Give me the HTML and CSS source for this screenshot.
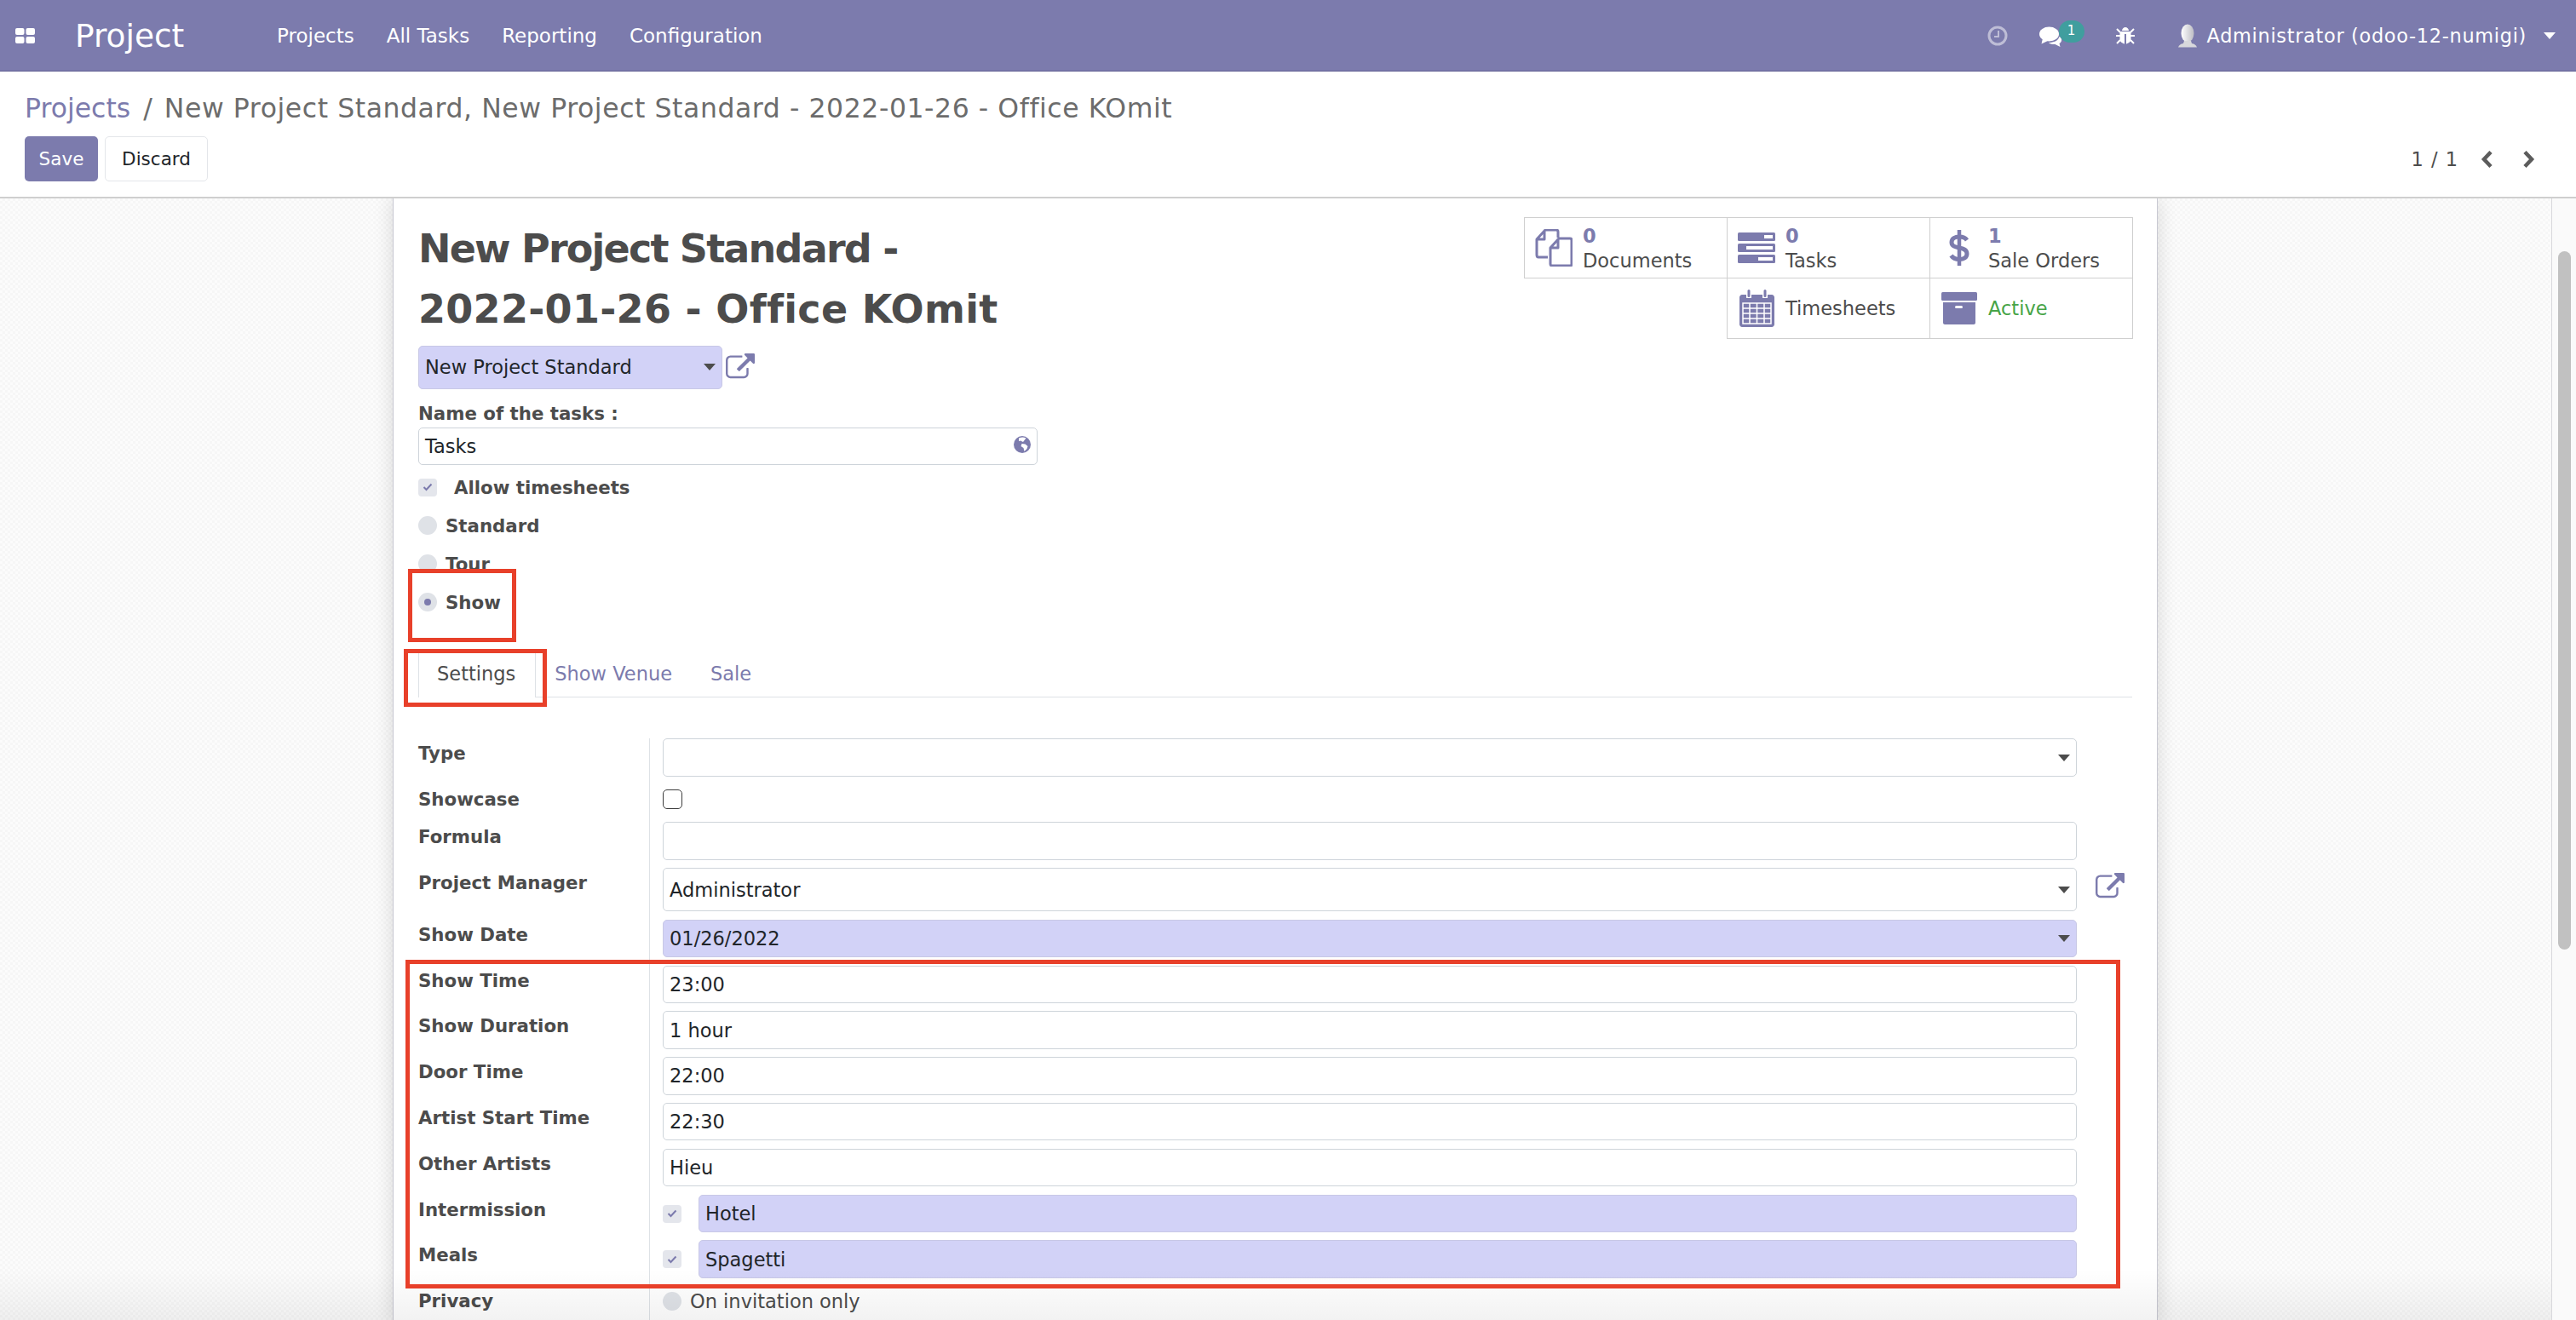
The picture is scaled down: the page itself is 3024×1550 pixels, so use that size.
FILE: index.html
```html
<!DOCTYPE html>
<html lang="en">
<head>
  <meta charset="UTF-8">
  <title>Project - Odoo</title>
  <link rel="stylesheet" href="styles.css">
</head>
<body>

  <!-- Top navbar -->
  <header class="navbar">
    <svg class="apps-icon" viewBox="0 0 23 18"><rect width="10.5" height="8" rx="2"/><rect x="12.5" width="10.5" height="8" rx="2"/><rect y="10" width="10.5" height="8" rx="2"/><rect x="12.5" y="10" width="10.5" height="8" rx="2"/></svg>
    <span class="brand">Project</span>
    <nav class="menu">
      <a>Projects</a>
      <a>All Tasks</a>
      <a>Reporting</a>
      <a>Configuration</a>
    </nav>
    <div class="systray">
      <svg class="clock-icon" viewBox="0 0 24 24"><circle cx="12" cy="12" r="10" fill="none" stroke="#fff" stroke-width="3"/><path d="M13 6v7H8" fill="none" stroke="#fff" stroke-width="2"/></svg>
      <div class="chat">
        <svg class="chat-icon" viewBox="0 0 28 24"><ellipse cx="12.500" cy="9" rx="11.500" ry="8.500" fill="#fff"/><path d="M5 14L3.500 20.500 12 16.500z" fill="#fff"/><path d="M12 19c6 0 11-2 12.500-7 2 1 3 3 2.500 5-.5 1.500-1.500 2.500-2.500 3l1 4-6-3c-3 .3-6-.3-7.500-2z" fill="#fff"/></svg>
        <span class="chat-badge">1</span>
      </div>
      <svg class="bug-icon" viewBox="0 0 22 21"><path d="M7 5c0-2 2-4 4-4s4 2 4 4zM6 6h10c1 0 1.500 1 1.500 2v7c0 3-3 5-5.500 5.500V9h-2v11.500C7.500 20 4.500 18 4.500 15V8C4.500 7 5 6 6 6z" fill="#fff"/><path d="M1 3l4 4M21 3l-4 4M0 11h5M22 11h-5M1 20l4-4M21 20l-4-4" stroke="#fff" stroke-width="2" fill="none"/></svg>
      <svg class="user-icon" viewBox="0 0 24 28"><defs><linearGradient id="head" x1="0" x2="1"><stop offset="0" stop-color="#fff"/><stop offset="1" stop-color="#bdbdc4"/></linearGradient></defs><ellipse cx="12" cy="11" rx="7.500" ry="10.500" fill="url(#head)"/><path d="M8 20h8l1 3c3 .5 5 2 6 4.500H1C2 25 4 23.500 7 23z" fill="#d8d8dc"/></svg>
      <span class="user-name">Administrator (odoo-12-numigi)</span>
      <span class="caret caret-white"></span>
    </div>
  </header>

  <!-- Breadcrumb, buttons and pager -->
  <section class="control-panel">
    <div class="breadcrumb"><a>Projects</a><span class="crumb-sep">/</span><span class="crumb-current">New Project Standard, New Project Standard - 2022-01-26 - Office KOmit</span></div>
    <div class="cp-bottom">
      <div class="cp-buttons">
        <button class="btn btn-primary">Save</button>
        <button class="btn btn-secondary">Discard</button>
      </div>
      <div class="pager">
        <span class="pager-value">1 / 1</span>
        <svg class="pager-arrow" viewBox="0 0 15 22"><path d="M12 2.500L4 11l8 8.500" fill="none" stroke="#5c5c5c" stroke-width="4.500"/></svg>
        <svg class="pager-arrow" viewBox="0 0 15 22"><path d="M3 2.500l8 8.500-8 8.500" fill="none" stroke="#5c5c5c" stroke-width="4.500"/></svg>
      </div>
    </div>
  </section>

  <div class="content">
    <main class="view">
      <div class="sheet">

        <div class="sheet-head">
          <div class="sheet-left">
            <h1 class="title"><span class="title-one">New Project Standard -</span><br><span class="title-two">2022-01-26 - Office KOmit</span></h1>
            <div class="select-row">
              <div class="field field-required field-parent"><span>New Project Standard</span><span class="caret"></span></div>
              <svg class="ext-icon ext-small" viewBox="0 0 1792 1792"><path d="M1408 928v320q0 119-84.500 203.500t-203.500 84.500h-832q-119 0-203.500-84.500t-84.500-203.500v-832q0-119 84.500-203.500t203.500-84.500h704q14 0 23 9t9 23v64q0 14-9 23t-23 9h-704q-66 0-113 47t-47 113v832q0 66 47 113t113 47h832q66 0 113-47t47-113v-320q0-14 9-23t23-9h64q14 0 23 9t9 23zm384-864v512q0 26-19 45t-45 19-45-19l-176-176-652 652q-10 10-23 10t-23-10l-114-114q-10-10-10-23t10-23l652-652-176-176q-19-19-19-45t19-45 45-19h512q26 0 45 19t19 45z"/></svg>
            </div>
            <div class="tasks-label">Name of the tasks :</div>
            <div class="field field-tasks"><span>Tasks</span>
              <svg class="globe-icon" viewBox="0 0 20 20"><circle cx="10" cy="10" r="10" fill="#7c7bad"/><path d="M6 2.500c3-1.500 6-1.500 8.500 0l-2 2.500-1.500 2-3-1.500-2 .5zM9.500 9l4 .5 3 2.500-1 3-3 3-1-4-3-2z" fill="#fff"/></svg>
            </div>
            <label class="check-row check-row-first"><span class="fake-check"><svg viewBox="0 0 12 10"><path d="M1.500 5l3 3 6-6.500" fill="none" stroke="#7c7bad" stroke-width="2"/></svg></span><b class="allow-label">Allow timesheets</b></label>
            <label class="check-row"><span class="fake-radio"></span><b>Standard</b></label>
            <label class="check-row"><span class="fake-radio"></span><b>Tour</b></label>
            <label class="check-row"><span class="fake-radio fake-radio-on"></span><b>Show</b></label>
          </div>

          <div class="stats">
            <div class="stat">
              <span class="stat-icon"><svg class="icon-docs" viewBox="0 0 44 44"><path d="M27 10V3q0-2-2-2H12L2 12V30q0 3 2 3H15M11 2V12H2" fill="none" stroke="#7c7bad" stroke-width="3" stroke-linejoin="round"/><path d="M28 11H41q2 0 2 2V41q0 2-2 2H20q-2 0-2-2V22zM27 11V22H18" fill="none" stroke="#7c7bad" stroke-width="3" stroke-linejoin="round"/></svg></span>
              <div class="stat-text"><b class="stat-num">0</b><span>Documents</span></div>
            </div>
            <div class="stat">
              <span class="stat-icon"><svg class="icon-tasks" viewBox="0 0 44 36"><rect width="44" height="10" rx="1.500"/><rect y="13" width="44" height="10" rx="1.500"/><rect y="26" width="44" height="10" rx="1.500"/><rect x="31" y="3" width="10" height="4" fill="#fff"/><rect x="10" y="16" width="31" height="4" fill="#fff"/><rect x="24" y="29" width="17" height="4" fill="#fff"/></svg></span>
              <div class="stat-text"><b class="stat-num">0</b><span>Tasks</span></div>
            </div>
            <div class="stat">
              <span class="stat-icon"><svg class="icon-usd" viewBox="0 0 24 44"><path d="M21 13c-2-3-5-4-9-4-5 0-9 2-9 6.500C3 25 21 19 21 29c0 4.500-4 6.500-9 6.500-4 0-7.500-1.500-9.500-4.500" fill="none" stroke="#7c7bad" stroke-width="5"/><path d="M12 1v42" stroke="#7c7bad" stroke-width="4.500"/></svg></span>
              <div class="stat-text"><b class="stat-num">1</b><span>Sale Orders</span></div>
            </div>
            <div class="stat stat-second">
              <span class="stat-icon"><svg class="icon-cal" viewBox="0 0 41 44"><path d="M3 6h5v4h6V6h13v4h6V6h5c1.500 0 3 1.500 3 3v32c0 1.500-1.500 3-3 3H3c-1.500 0-3-1.500-3-3V9c0-1.500 1.500-3 3-3z" fill="#7c7bad"/><rect x="9.500" y="0" width="3" height="9" rx="1.500" fill="#7c7bad"/><rect x="28.500" y="0" width="3" height="9" rx="1.500" fill="#7c7bad"/><path d="M4 16h33v24H4zM4 22h33M4 28h33M4 34h33M12 16v24M20.500 16v24M29 16v24" fill="none" stroke="#fff" stroke-width="1.500"/></svg></span>
              <div class="stat-text"><span>Timesheets</span></div>
            </div>
            <div class="stat">
              <span class="stat-icon"><svg class="icon-archive" viewBox="0 0 42 38"><rect width="42" height="10" rx="1.500"/><path d="M2 12h38v24c0 1-1 2-2 2H4c-1 0-2-1-2-2z"/><rect x="16" y="16" width="9" height="3" rx="1.500" fill="#fff"/></svg></span>
              <div class="stat-text"><span class="stat-active">Active</span></div>
            </div>
          </div>
        </div>

        <!-- Notebook tabs -->
        <ul class="tabs">
          <li class="tab tab-active">Settings</li>
          <li class="tab">Show Venue</li>
          <li class="tab">Sale</li>
        </ul>

        <!-- Settings form -->
        <div class="form">
          <div class="row"><div class="row-label">Type</div><div class="row-value"><div class="field"><span></span><span class="caret"></span></div></div></div>
          <div class="row row-short"><div class="row-label">Showcase</div><div class="row-value"><span class="plain-check"></span></div></div>
          <div class="row"><div class="row-label">Formula</div><div class="row-value"><div class="field"></div></div></div>
          <div class="row"><div class="row-label">Project Manager</div><div class="row-value">
            <div class="field field-tall"><span>Administrator</span><span class="caret"></span></div>
            <svg class="ext-icon" viewBox="0 0 1792 1792"><path d="M1408 928v320q0 119-84.500 203.500t-203.500 84.500h-832q-119 0-203.500-84.500t-84.500-203.500v-832q0-119 84.500-203.500t203.500-84.500h704q14 0 23 9t9 23v64q0 14-9 23t-23 9h-704q-66 0-113 47t-47 113v832q0 66 47 113t113 47h832q66 0 113-47t47-113v-320q0-14 9-23t23-9h64q14 0 23 9t9 23zm384-864v512q0 26-19 45t-45 19-45-19l-176-176-652 652q-10 10-23 10t-23-10l-114-114q-10-10-10-23t10-23l652-652-176-176q-19-19-19-45t19-45 45-19h512q26 0 45 19t19 45z"/></svg>
          </div></div>
          <div class="row"><div class="row-label">Show Date</div><div class="row-value"><div class="field field-required"><span>01/26/2022</span><span class="caret"></span></div></div></div>
          <div class="row"><div class="row-label">Show Time</div><div class="row-value"><div class="field"><span>23:00</span></div></div></div>
          <div class="row"><div class="row-label">Show Duration</div><div class="row-value"><div class="field"><span>1 hour</span></div></div></div>
          <div class="row"><div class="row-label">Door Time</div><div class="row-value"><div class="field"><span>22:00</span></div></div></div>
          <div class="row"><div class="row-label">Artist Start Time</div><div class="row-value"><div class="field"><span>22:30</span></div></div></div>
          <div class="row"><div class="row-label">Other Artists</div><div class="row-value"><div class="field"><span>Hieu</span></div></div></div>
          <div class="row"><div class="row-label">Intermission</div><div class="row-value">
            <span class="fake-check"><svg viewBox="0 0 12 10"><path d="M1.500 5l3 3 6-6.500" fill="none" stroke="#7c7bad" stroke-width="2"/></svg></span>
            <div class="field field-required field-checked"><span>Hotel</span></div>
          </div></div>
          <div class="row"><div class="row-label">Meals</div><div class="row-value">
            <span class="fake-check"><svg viewBox="0 0 12 10"><path d="M1.500 5l3 3 6-6.500" fill="none" stroke="#7c7bad" stroke-width="2"/></svg></span>
            <div class="field field-required field-checked"><span>Spagetti</span></div>
          </div></div>
          <div class="row"><div class="row-label">Privacy</div><div class="row-value row-privacy"><span class="fake-radio"></span><span class="privacy-text">On invitation only</span></div></div>
        </div>
      </div>

      <div class="bottom-fade"></div>
    </main>

    <div class="scrollbar"><div class="scroll-thumb"></div></div>

    <!-- Red annotation boxes drawn over the screenshot -->
    <div class="mark mark-show"></div>
    <div class="mark mark-tab"></div>
    <div class="mark mark-rows"></div>
  </div>

</body>
</html>
```

FILE: styles.css
```css
/* Reset and page */
* {
  box-sizing: border-box;
  margin: 0;
  padding: 0;
}

body {
  width: 3024px;
  height: 1550px;
  overflow: hidden;
  display: flex;
  flex-direction: column;
  font-family: "DejaVu Sans", sans-serif;
  font-size: 22.5px;
  color: #212529;
  background-color: #fff;
}

/* Navbar */
.navbar {
  display: flex;
  align-items: center;
  flex: none;
  height: 84px;
  padding-left: 18px;
  background-color: #7c7bad;
  border-bottom: 1px solid #5f5e92;
  color: #fff;
}

.apps-icon {
  width: 23px;
  height: 18px;
  fill: #fff;
}

.brand {
  margin-left: 47px;
  width: 237px;
  font-size: 37.5px;
}

.menu {
  display: flex;
  gap: 38px;
  font-size: 23px;
}

.systray {
  display: flex;
  align-items: center;
  margin-left: auto;
  padding-right: 24px;
}

.clock-icon {
  width: 24px;
  height: 24px;
  opacity: 0.5;
  margin-right: 36px;
}

.chat {
  display: flex;
  width: 54px;
  margin-right: 37px;
  position: relative;
}

.chat-icon {
  width: 28px;
  height: 24px;
  margin-top: 3px;
}

.chat-badge {
  position: absolute;
  left: 24px;
  top: -4px;
  width: 30px;
  height: 26px;
  border-radius: 13px;
  background-color: #409e9e;
  font-size: 15px;
  line-height: 25px;
  text-align: center;
}

.bug-icon {
  width: 22px;
  height: 21px;
  margin-right: 50px;
}

.user-icon {
  width: 24px;
  height: 28px;
  margin-right: 11px;
}

.user-name {
  font-size: 22.4px;
  letter-spacing: 0.7px;
  margin-right: 20px;
}

.caret {
  flex: none;
  width: 0;
  height: 0;
  margin-left: auto;
  border-left: 7px solid transparent;
  border-right: 7px solid transparent;
  border-top: 8px solid #4c4c4c;
}

.caret-white {
  border-top-color: #fff;
  margin-left: 0;
}

/* Control panel */
.control-panel {
  flex: none;
  height: 149px;
  padding: 21px 29px 0;
  border-bottom: 2px solid #cfcfcf;
  background-color: #fff;
}

.breadcrumb {
  font-size: 31.5px;
  line-height: 44px;
  color: #6c6c6c;
  white-space: nowrap;
}

.breadcrumb a {
  color: #7c7bad;
}

.crumb-sep {
  margin: 0 14px 0 15px;
}

.crumb-current {
  letter-spacing: 0.57px;
}

.cp-bottom {
  display: flex;
  justify-content: space-between;
  align-items: center;
  margin-top: 11px;
  padding-right: 19px;
  height: 53px;
}

.cp-buttons {
  display: flex;
  gap: 8px;
}

.btn {
  height: 53px;
  border-radius: 5px;
  font-family: inherit;
  font-size: 21.5px;
}

.btn-primary {
  width: 86px;
  border: none;
  background-color: #7c7bad;
  color: #fff;
}

.btn-secondary {
  width: 121px;
  border: 1px solid #e4e6ea;
  background-color: #fff;
  color: #212529;
}

.pager {
  display: flex;
  align-items: center;
  color: #4c4c4c;
}

.pager-value {
  word-spacing: 2px;
  margin-right: 27px;
}

.pager-arrow {
  width: 15px;
  height: 22px;
  margin-right: 34px;
}

.pager-arrow:last-child {
  margin-right: 0;
}

/* Main area */
.content {
  flex: 1;
  min-height: 0;
  display: flex;
  position: relative;
}

.view {
  flex: 1;
  min-width: 0;
  position: relative;
  overflow: hidden;
  padding-left: 461px;
  background-color: #f9f9f9;
  background-image: repeating-conic-gradient(#f6f6f6 0 25%, #fcfcfc 0 50%);
  background-size: 6px 6px;
  border-right: 1px solid #d8d8dc;
}

.bottom-fade {
  position: absolute;
  left: 0;
  right: 0;
  bottom: 0;
  height: 60px;
  background: linear-gradient(rgba(0, 0, 0, 0), rgba(0, 0, 0, 0.05));
}

.sheet {
  width: 2072px;
  min-height: 100%;
  padding: 24px 29px 0 29px;
  background-color: #fff;
  border-left: 1px solid #c8c8d2;
  border-right: 1px solid #c8c8d2;
  box-shadow: 0 0 22px rgba(0, 0, 0, 0.14);
}

.scrollbar {
  flex: none;
  width: 28px;
  padding: 62px 6px 0 7px;
  background-color: #fafafa;
}

.scroll-thumb {
  height: 820px;
  border-radius: 8px;
  background-color: #c1c1c1;
}

/* Sheet header */
.sheet-head {
  display: flex;
  justify-content: space-between;
  align-items: flex-start;
}

.sheet-left {
  width: 727px;
}

.title {
  font-size: 46px;
  font-weight: bold;
  line-height: 71px;
  color: #4c4c4c;
  white-space: nowrap;
}

.title-one {
  letter-spacing: -1.8px;
}

.title-two {
  letter-spacing: 0.3px;
}

.select-row {
  display: flex;
  align-items: center;
  gap: 4px;
  margin-top: 7px;
}

.field {
  display: flex;
  align-items: center;
  width: 1660px;
  height: 44.4px;
  padding: 0 7px;
  border: 1px solid #ced4da;
  border-radius: 5px;
  background-color: #fff;
}

.field-required {
  background-color: #d2d2f7;
  border-color: #c8c8e6;
}

.field-parent {
  width: 357px;
  height: 50.5px;
}

.field-tall {
  height: 51.5px;
}

.field-tasks {
  width: 727px;
  justify-content: space-between;
}

.field-checked {
  width: 1618px;
}

.ext-icon {
  flex: none;
  width: 34px;
  height: 34px;
  margin-left: 22px;
  margin-top: 6px;
  fill: #7c7bad;
}

.ext-small {
  margin-left: 0;
  margin-top: 2px;
}

.tasks-label {
  margin-top: 13px;
  font-weight: bold;
  font-size: 21.3px;
  line-height: 32px;
  color: #4c4c4c;
}

.globe-icon {
  width: 20px;
  height: 20px;
  margin-bottom: 3px;
}

.check-row {
  display: flex;
  align-items: center;
  height: 45px;
  font-size: 21.3px;
  color: #4c4c4c;
}

.check-row-first {
  margin-top: 4px;
}

.fake-check {
  flex: none;
  display: flex;
  align-items: center;
  justify-content: center;
  width: 22px;
  height: 21px;
  border-radius: 4px;
  background-color: #e4e6ec;
}

.fake-check svg {
  width: 12px;
  height: 10px;
}

.allow-label {
  margin-left: 20px;
}

.fake-radio {
  flex: none;
  display: flex;
  align-items: center;
  justify-content: center;
  width: 22px;
  height: 22px;
  margin-right: 10px;
  border-radius: 50%;
  background-color: #dfe2e7;
}

.fake-radio-on::after {
  content: "";
  width: 8px;
  height: 8px;
  border-radius: 50%;
  background-color: #7c7bad;
}

/* Stat buttons */
.stats {
  display: grid;
  grid-template-columns: repeat(3, 238px);
  margin-top: -2px;
}

.stat {
  display: flex;
  align-items: center;
  height: 72px;
  margin: 0 -1px -1px 0;
  border: 1px solid #cfcfcf;
  color: #4c4c4c;
}

.stat-second {
  grid-column-start: 2;
}

.stat-icon {
  flex: none;
  display: flex;
  justify-content: center;
  width: 68px;
  fill: #7c7bad;
}

.icon-docs,
.icon-usd,
.icon-cal {
  height: 44px;
}

.icon-docs {
  width: 44px;
}

.icon-usd {
  width: 24px;
}

.icon-cal {
  width: 41px;
}

.icon-tasks {
  width: 44px;
  height: 36px;
}

.icon-archive {
  width: 42px;
  height: 38px;
}

.stat-text {
  display: flex;
  flex-direction: column;
  padding-top: 1px;
  line-height: 29px;
}

.stat-num {
  color: #7c7bad;
}

.stat-active {
  color: #47a447;
}

/* Tabs */
.tabs {
  display: flex;
  list-style: none;
  height: 54px;
  margin-top: 35px;
  border-bottom: 1px solid #dee2e6;
}

.tab {
  display: flex;
  align-items: center;
  height: 52px;
  padding: 0 23px 0 22px;
  color: #7c7bad;
}

.tab-active {
  height: 54px;
  padding: 0 23px 2px 21px;
  color: #4c4c4c;
  background-color: #fff;
  border: 1px solid #dee2e6;
  border-bottom: none;
}

/* Form rows */
.form {
  margin-top: 48.5px;
}

.row {
  display: flex;
}

.row-short .row-label,
.row-short .row-value {
  padding-bottom: 0;
  height: 44px;
}

.row-label {
  flex: none;
  width: 272px;
  padding-bottom: 9.4px;
  border-right: 1px solid #dee2e6;
  font-size: 21.3px;
  font-weight: bold;
  line-height: 36px;
  color: #4c4c4c;
}

.row-value {
  display: flex;
  align-items: flex-start;
  padding-left: 15px;
  padding-bottom: 9.4px;
}

.row-value > .fake-check {
  margin-top: 12px;
  margin-right: 20px;
}

.plain-check {
  width: 23px;
  height: 23px;
  margin-top: 6px;
  border: 1px solid #3c3c3c;
  border-radius: 5px;
  background-color: #fff;
}

.row-privacy {
  align-items: center;
}

.privacy-text {
  color: #4c4c4c;
}

/* Red annotations */
.mark {
  position: absolute;
  border: 5px solid #e8402a;
}

.mark-show {
  left: 479px;
  top: 435px;
  width: 127px;
  height: 86px;
}

.mark-tab {
  left: 474px;
  top: 529px;
  width: 168px;
  height: 68px;
}

.mark-rows {
  left: 476px;
  top: 894px;
  width: 2013px;
  height: 386px;
}
```
